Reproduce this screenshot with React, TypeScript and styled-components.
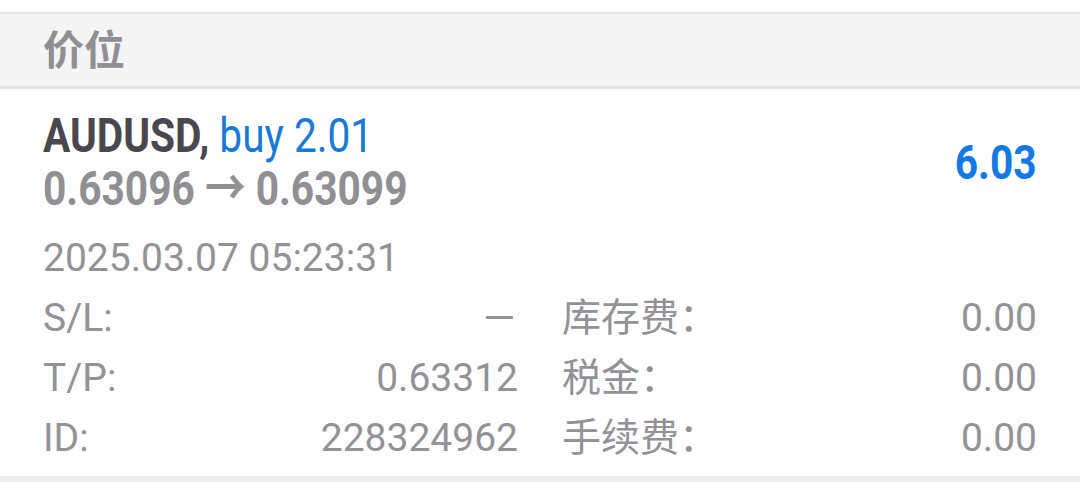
import React from 'react';
import styled, { createGlobalStyle } from 'styled-components';

const GlobalStyle = createGlobalStyle`
  html, body {
    margin: 0;
    padding: 0;
    background: #ffffff;
  }
  body {
    font-family: Roboto, "Noto Sans CJK SC", sans-serif;
  }
`;

const Page = styled.div`
  width: 1080px;
  height: 482px;
  padding-top: 12px;
  box-sizing: border-box;
  overflow: hidden;
  display: flex;
  flex-direction: column;
`;

const SectionHeader = styled.div`
  height: 77px;
  flex-shrink: 0;
  box-sizing: border-box;
  background: #f5f5f5;
  border-top: 2px solid #e6e6e6;
  border-bottom: 3px solid #e6e6e6;
  padding: 0 43px 6px;
  display: flex;
  align-items: center;
`;

const SectionTitle = styled.span`
  font-family: "Noto Sans CJK SC", sans-serif;
  font-weight: 700;
  font-size: 41px;
  line-height: 1;
  color: #909094;
`;

const PositionCard = styled.div`
  padding: 20px 43px 8px;
  border-bottom: 6px solid #ededed;
`;

const TopRow = styled.div`
  display: flex;
  justify-content: space-between;
  align-items: center;
`;

const TitleBlock = styled.div`
  display: flex;
  flex-direction: column;
`;

const TitleLine = styled.div<{ $muted?: boolean }>`
  font-size: 49px;
  font-weight: 700;
  line-height: 53px;
  white-space: nowrap;
  transform: scaleX(0.83);
  transform-origin: left center;
  color: ${(p) => (p.$muted ? '#909094' : '#48484e')};
`;

const Side = styled.span`
  font-weight: 400;
  color: #1a78d8;
`;

const Profit = styled.div`
  font-size: 49px;
  font-weight: 700;
  color: #1479e4;
  transform: scaleX(0.83);
  transform-origin: right center;
`;

const DetailText = styled.div`
  font-size: 39px;
  line-height: 60px;
  color: #929297;
`;

const DateLine = styled(DetailText)`
  margin-top: 13px;
`;

const Grid = styled.div`
  display: grid;
  grid-template-columns: 475px 475px;
  column-gap: 44px;
`;

const Field = styled(DetailText)`
  display: flex;
  justify-content: space-between;
`;

const Label = styled.span`
  font-family: Roboto, "Noto Sans CJK SC", sans-serif;
`;

const Value = styled.span<{ $dash?: boolean }>`
  display: inline-block;
  transform-origin: right center;
  transform: ${(p) => (p.$dash ? 'scaleX(1.4)' : 'none')};
`;

const rows: [string, string, string, string][] = [
  ['S/L:', '–', '库存费：', '0.00'],
  ['T/P:', '0.63312', '税金：', '0.00'],
  ['ID:', '228324962', '手续费：', '0.00'],
];

const App = () => {
  return (
    <>
      <GlobalStyle />
      <Page>
        <SectionHeader>
          <SectionTitle>价位</SectionTitle>
        </SectionHeader>
        <PositionCard>
          <TopRow>
            <TitleBlock>
              <TitleLine>
                AUDUSD, <Side>buy 2.01</Side>
              </TitleLine>
              <TitleLine $muted>0.63096 → 0.63099</TitleLine>
            </TitleBlock>
            <Profit>6.03</Profit>
          </TopRow>
          <DateLine>2025.03.07 05:23:31</DateLine>
          <Grid>
            {rows.map(([l1, v1, l2, v2]) => (
              <React.Fragment key={l1}>
                <Field>
                  <Label>{l1}</Label>
                  <Value $dash={v1 === '–'}>{v1}</Value>
                </Field>
                <Field>
                  <Label>{l2}</Label>
                  <Value>{v2}</Value>
                </Field>
              </React.Fragment>
            ))}
          </Grid>
        </PositionCard>
      </Page>
    </>
  );
};

export default App;
